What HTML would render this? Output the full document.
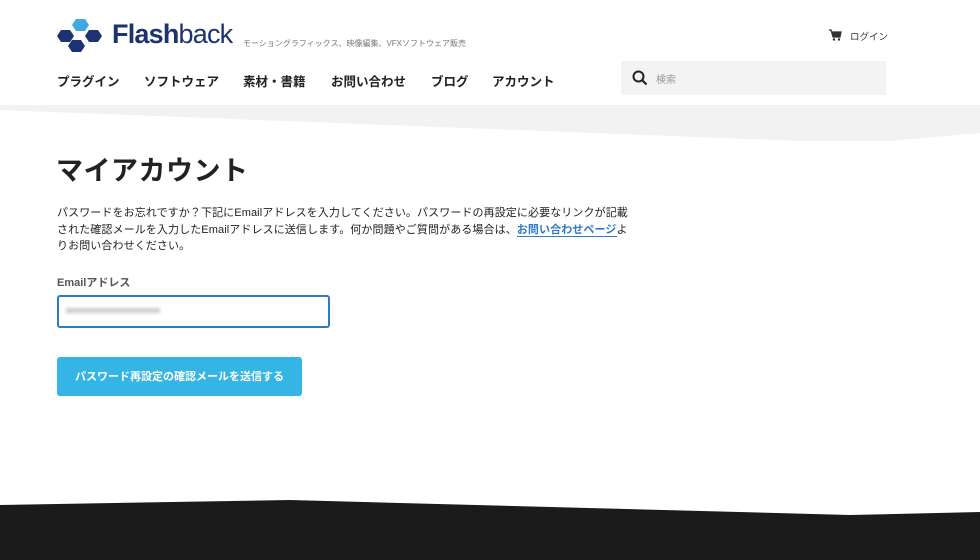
<!DOCTYPE html>
<html><head><meta charset="utf-8"><style>
*{margin:0;padding:0;box-sizing:border-box}
body{width:980px;height:560px;overflow:hidden;background:#fff;font-family:"Liberation Sans","Noto Sans CJK JP",sans-serif;color:#222;position:relative}
.abs{position:absolute}
.nav span{position:absolute;top:71px;font-size:12.5px;font-weight:bold;color:#222;white-space:nowrap}
</style></head><body>
<svg class="abs" style="left:0;top:105px" width="980" height="40"><path d="M0 0H980V28L890 36L800 36L0 5Z" fill="#f2f2f2"/></svg>
<svg class="abs" style="left:0;top:495px" width="980" height="65"><path d="M0 10L290 5L850 20L980 17V65H0Z" fill="#1b1b1b"/></svg>

<svg class="abs" style="left:56px;top:16px" width="50" height="38" viewBox="0 0 50 38">
<polygon points="20,3 29,3 33,9 29,15 20,15 16,9" fill="#3fa9e0"/>
<polygon points="5,14 14,14 18,20 14,26 5,26 1,20" fill="#1d3270"/>
<polygon points="33,14 42,14 46,20 42,26 33,26 29,20" fill="#1d3270"/>
<polygon points="16,24 25,24 29,30 25,36 16,36 12,30" fill="#1d3270"/>
</svg>
<div class="abs" style="left:112px;top:17px;font-size:27px;color:#1d3270;letter-spacing:-0.8px;line-height:34px"><b>Flash</b>back</div>
<div class="abs" style="left:243px;top:38px;font-size:8px;color:#777;white-space:nowrap">モーショングラフィックス、映像編集、VFXソフトウェア販売</div>

<div class="nav">
<span style="left:57px">プラグイン</span><span style="left:144px">ソフトウェア</span><span style="left:243px">素材・書籍</span><span style="left:331px">お問い合わせ</span><span style="left:431px">ブログ</span><span style="left:492px">アカウント</span>
</div>

<svg class="abs" style="left:829px;top:29px" width="13" height="12" viewBox="0 0 13 12"><path d="M0 1H2L4 8H11L12 3H3" fill="#333" stroke="#333" stroke-width="1.2"/><circle cx="5" cy="10.5" r="1.2" fill="#333"/><circle cx="10" cy="10.5" r="1.2" fill="#333"/></svg>
<div class="abs" style="left:850px;top:29px;font-size:9.5px;color:#333">ログイン</div>

<div class="abs" style="left:621px;top:61px;width:265px;height:34px;background:#f3f3f3;border-radius:2px"></div>
<svg class="abs" style="left:632px;top:70px" width="16" height="16" viewBox="0 0 16 16"><circle cx="6.5" cy="6.5" r="5" fill="none" stroke="#222" stroke-width="2"/><path d="M10 10L14.5 14.5" stroke="#222" stroke-width="2.2"/></svg>
<div class="abs" style="left:656px;top:71px;font-size:10px;color:#999">検索</div>

<div class="abs" style="left:56px;top:149px;font-size:27px;font-weight:bold;color:#222;letter-spacing:0.5px">マイアカウント</div>
<div class="abs" style="left:57px;top:205px;width:580px;font-size:11px;line-height:16.5px;color:#222;letter-spacing:0.1px">パスワードをお忘れですか？下記にEmailアドレスを入力してください。パスワードの再設定に必要なリンクが記載<br>された確認メールを入力したEmailアドレスに送信します。何か問題やご質問がある場合は、<b style="color:#2e7bc4;border-bottom:1px solid #2e7bc4">お問い合わせページ</b>よ<br>りお問い合わせください。</div>

<div class="abs" style="left:57px;top:274px;font-size:11px;font-weight:bold;color:#555">Emailアドレス</div>
<div class="abs" style="left:57px;top:295px;width:273px;height:33px;border:2px solid #2e7bc4;border-radius:3px"></div>
<div class="abs" style="left:66px;top:308px;width:94px;height:5px;background:#ccc;filter:blur(1.5px)"></div>

<div class="abs" style="left:57px;top:357px;width:245px;height:39px;background:#35b5e5;border-radius:3px;color:#fff;font-size:11px;font-weight:bold;text-align:center;line-height:41px">パスワード再設定の確認メールを送信する</div>
</body></html>
